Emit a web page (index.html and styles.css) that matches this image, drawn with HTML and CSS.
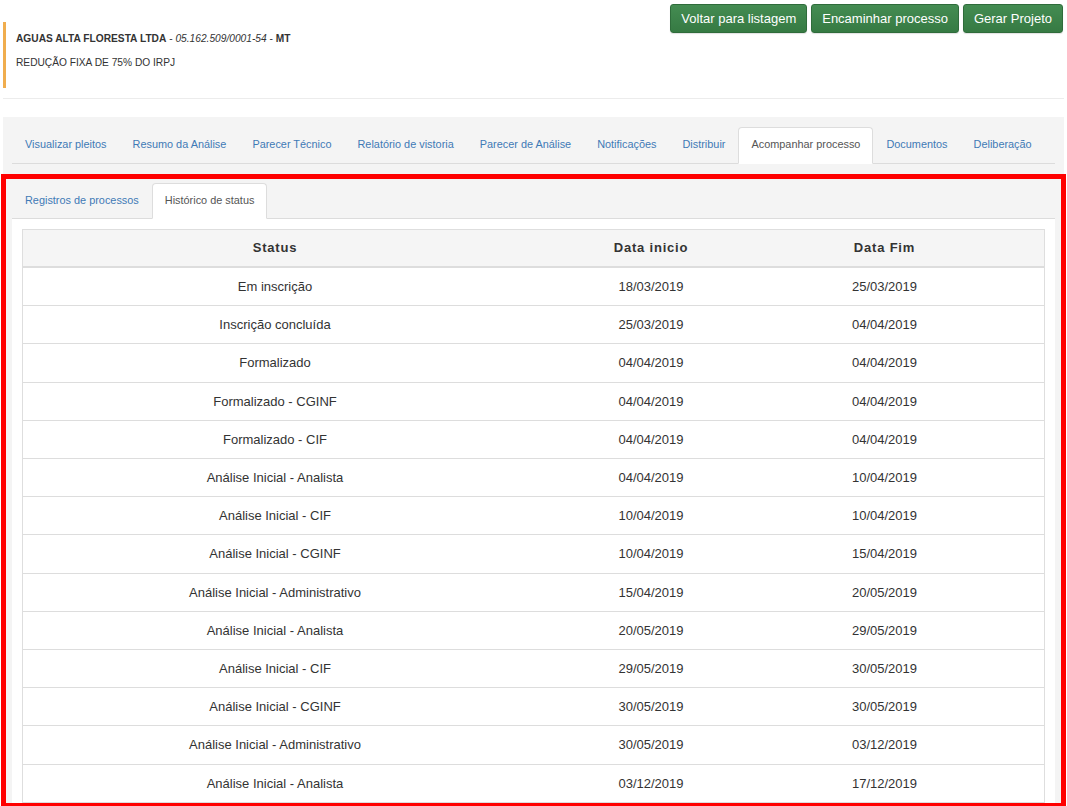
FILE: index.html
```html
<!DOCTYPE html>
<html lang="pt-BR">
<head>
<meta charset="utf-8">
<title>Acompanhar processo</title>
<link rel="stylesheet" href="styles.css">
</head>
<body>
<div class="page">
  <header class="top">
    <div class="company">
      <p class="line"><strong>AGUAS ALTA FLORESTA LTDA</strong> - <em>05.162.509/0001-54</em> - <span class="uf">MT</span></p>
      <p class="line">REDUÇÃO FIXA DE 75% DO IRPJ</p>
    </div>
    <div class="actions">
      <button class="btn">Voltar para listagem</button>
      <button class="btn">Encaminhar processo</button>
      <button class="btn">Gerar Projeto</button>
    </div>
  </header>
  <hr class="sep">
  <section class="panel">
    <ul class="tabs">
      <li class="tab">Visualizar pleitos</li>
      <li class="tab">Resumo da Análise</li>
      <li class="tab">Parecer Técnico</li>
      <li class="tab">Relatório de vistoria</li>
      <li class="tab">Parecer de Análise</li>
      <li class="tab">Notificações</li>
      <li class="tab">Distribuir</li>
      <li class="tab active">Acompanhar processo</li>
      <li class="tab">Documentos</li>
      <li class="tab">Deliberação</li>
    </ul>
    <div class="highlight">
      <ul class="tabs inner">
        <li class="tab">Registros de processos</li>
        <li class="tab active">Histórico de status</li>
      </ul>
      <div class="content">
        <table class="grid">
          <colgroup><col class="c1"><col class="c2"><col class="c3"></colgroup>
          <thead>
            <tr><th>Status</th><th>Data inicio</th><th class="last">Data Fim</th></tr>
          </thead>
          <tbody>
            <tr><td>Em inscrição</td><td>18/03/2019</td><td class="last">25/03/2019</td></tr>
            <tr><td>Inscrição concluída</td><td>25/03/2019</td><td class="last">04/04/2019</td></tr>
            <tr><td>Formalizado</td><td>04/04/2019</td><td class="last">04/04/2019</td></tr>
            <tr><td>Formalizado - CGINF</td><td>04/04/2019</td><td class="last">04/04/2019</td></tr>
            <tr><td>Formalizado - CIF</td><td>04/04/2019</td><td class="last">04/04/2019</td></tr>
            <tr><td>Análise Inicial - Analista</td><td>04/04/2019</td><td class="last">10/04/2019</td></tr>
            <tr><td>Análise Inicial - CIF</td><td>10/04/2019</td><td class="last">10/04/2019</td></tr>
            <tr><td>Análise Inicial - CGINF</td><td>10/04/2019</td><td class="last">15/04/2019</td></tr>
            <tr><td>Análise Inicial - Administrativo</td><td>15/04/2019</td><td class="last">20/05/2019</td></tr>
            <tr><td>Análise Inicial - Analista</td><td>20/05/2019</td><td class="last">29/05/2019</td></tr>
            <tr><td>Análise Inicial - CIF</td><td>29/05/2019</td><td class="last">30/05/2019</td></tr>
            <tr><td>Análise Inicial - CGINF</td><td>30/05/2019</td><td class="last">30/05/2019</td></tr>
            <tr><td>Análise Inicial - Administrativo</td><td>30/05/2019</td><td class="last">03/12/2019</td></tr>
            <tr><td>Análise Inicial - Analista</td><td>03/12/2019</td><td class="last">17/12/2019</td></tr>
          </tbody>
        </table>
      </div>
    </div>
  </section>
</div>
</body>
</html>
```
FILE: styles.css
```css
* { box-sizing: border-box; }
html, body {
  margin: 0;
  padding: 0;
  background: #fff;
  overflow: hidden;
  height: 806px;
}
body {
  font-family: "Liberation Sans", Arial, sans-serif;
  color: #333;
}
.page {
  padding: 0 3px;
}
.top {
  display: flex;
  justify-content: space-between;
  align-items: flex-start;
  padding-top: 4px;
}
.company {
  margin-top: 18px;
  border-left: 3px solid #f0ad4e;
  padding: 11px 10px 9px 10px;
  height: 66px;
}
.line {
  margin: 0;
  font-size: 10.2px;
  line-height: 12px;
  color: #333;
}
.line + .line { margin-top: 12px; }
.line strong { font-weight: bold; }
.line em { font-style: italic; }
.line .uf { font-weight: bold; }
.actions {
  display: flex;
  gap: 4px;
  margin-right: 1px;
}
.btn {
  font-family: "Liberation Sans", Arial, sans-serif;
  font-size: 13px;
  height: 29px;
  padding: 0 10px;
  color: #fff;
  background: linear-gradient(#448c52, #367a43);
  border: 1px solid #2f6c3b;
  border-radius: 3px;
  box-shadow: 0 1px 1px rgba(0,0,0,0.12);
}
.sep {
  margin: 10px 0 0;
  border: 0;
  border-top: 1px solid #ececec;
  height: 0;
}
.panel {
  margin-top: 18px;
  background: #f4f4f4;
  padding: 10px 9px 0;
  height: 700px;
}
.tabs {
  list-style: none;
  margin: 0;
  padding: 0;
  display: flex;
  border-bottom: 1px solid #dcdcdc;
  height: 37px;
}
.tab {
  font-size: 10.9px;
  line-height: 33px;
  height: 37px;
  padding: 0 12px;
  color: #3f7ab6;
  border: 1px solid transparent;
  border-radius: 4px 4px 0 0;
  white-space: nowrap;
}
.tab.active {
  background: #fff;
  color: #555;
  border-color: #dddddd;
  border-bottom-color: #fff;
}
.highlight {
  margin: 10px -11px 0;
  border: 5px solid #ff0000;
  padding: 4px 6px 0;
  height: 634px;
  overflow: hidden;
  background: #f4f4f4;
}
.inner {
  height: 36px;
}
.inner .tab {
  height: 36px;
  line-height: 32px;
}
.content {
  background: #fff;
  padding: 10px;
  height: 700px;
}
.grid {
  width: 100%;
  table-layout: fixed;
  border-collapse: separate;
  border-spacing: 0;
  border: 1px solid #dedede;
  font-size: 13px;
}
.c1 { width: 504px; }
.c2 { width: 248px; }
.grid th {
  background: #f5f5f5;
  font-weight: bold;
  letter-spacing: 0.8px;
  padding: 8px;
  line-height: 20px;
  text-align: center;
  border-bottom: 2px solid #dddddd;
  color: #333;
}
.grid td {
  padding: 8px;
  line-height: 21.2px;
  text-align: center;
  border-bottom: 1px solid #dddddd;
  color: #333;
}
.grid .last {
  padding-right: 58px;
}
```
